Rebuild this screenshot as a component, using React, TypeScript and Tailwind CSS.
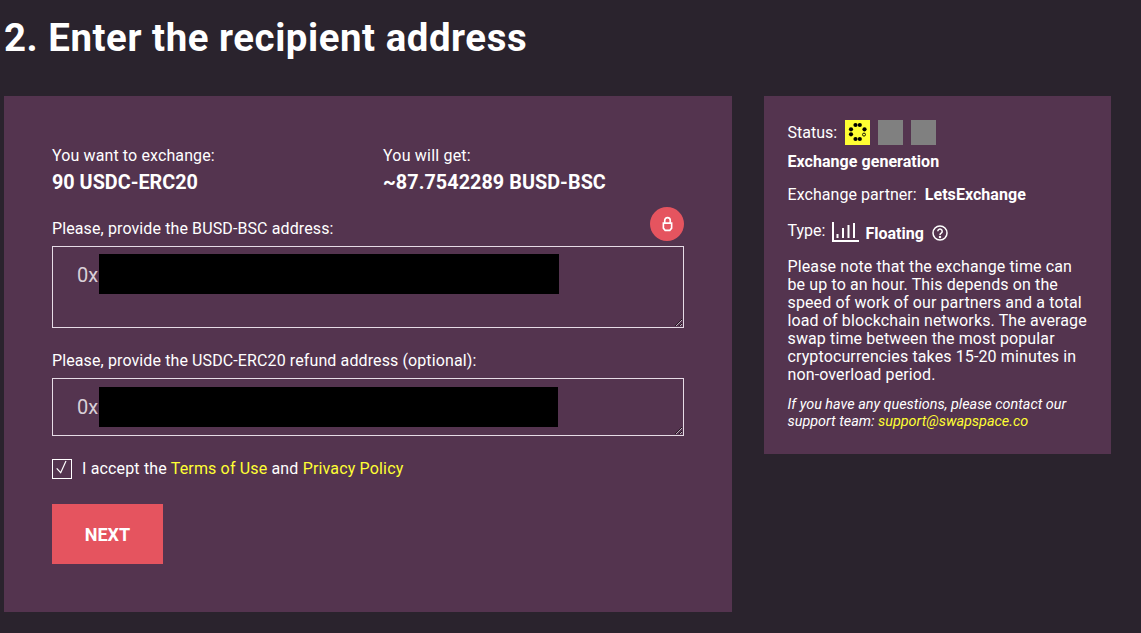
import React from "react";

function Spinner() {
  const dots = [
    [10.5, 5],[14.8, 5],[6, 9.3],[19.5, 9.3],[6, 14.3],[19, 14.6, 1],[10.5, 19],[14.8, 19],
  ];
  return (
    <span className="flex h-[25px] w-[25px] items-center justify-center bg-[#ffff33]">
      <svg width="25" height="25" viewBox="0 0 25 25">
        {dots.map((d, i) => (
          <circle key={i} cx={d[0]} cy={d[1]} r={d[2] ? 1.5 : 2.1} fill={d[2] ? "none" : "#000"} stroke={d[2] ? "#000" : "none"} strokeWidth="0.9" />
        ))}
      </svg>
    </span>
  );
}

function AddressField({ label, heightClass, mt, redactTop, redactWidth, lock }: { label: string; heightClass: string; mt: string; redactTop: string; redactWidth: string; lock?: boolean }) {
  return (
    <div className={`relative ${mt}`}>
      <label className="block text-[16px] leading-[20px] tracking-[0.11px]">{label}</label>
      {lock && (
        <span className="absolute right-0 top-[-12px] flex h-[34px] w-[34px] items-center justify-center rounded-full bg-[#e5545f]">
          <svg width="11" height="16" viewBox="0 0 12 16" fill="none" stroke="#fff" strokeWidth="1.8">
            <path d="M3 7V4a3 3 0 0 1 6 0v3" />
            <path d="M1.5 7h9v5.5L8.5 15h-5l-2-2.5z" />
          </svg>
        </span>
      )}
      <div className="relative mt-[7px]">
        <textarea
          defaultValue="0x"
          className={`block w-full ${heightClass} border border-[#e6dbe6] bg-transparent pl-[24px] pt-[14px] text-[20px] leading-[28px] text-[#d9d0d8] outline-none`}
        />
        <div className={`absolute left-[47px] ${redactTop} ${redactWidth} h-[40px] bg-black`} />
      </div>
    </div>
  );
}

export default function App() {
  return (
    <div className="min-h-[633px] overflow-hidden bg-[#2a232d] pl-[4px] text-white [font-family:Roboto,'Liberation_Sans',sans-serif]">
      <h1 className="pt-[14px] text-[38.4px] font-bold leading-[48px] tracking-[0.55px]">2. Enter the recipient address</h1>
      <div className="mt-[34px] flex items-start gap-[32px]">
        <section className="h-[516px] w-[728px] bg-[#54344f] px-[48px] pt-[50px]">
          <div className="flex">
            <div className="w-[331px]">
              <div className="text-[16px] leading-[20px] tracking-[0.12px]">You want to exchange:</div>
              <div className="mt-[5px] text-[19.8px] font-bold leading-[24px]">90 USDC-ERC20</div>
            </div>
            <div>
              <div className="text-[16px] leading-[20px] tracking-[0.2px]">You will get:</div>
              <div className="mt-[5px] text-[19.8px] font-bold leading-[24px] tracking-[0.05px]">~87.7542289 BUSD-BSC</div>
            </div>
          </div>
          <AddressField lock label="Please, provide the BUSD-BSC address:" heightClass="h-[82px]" mt="mt-[24px]" redactTop="top-[8px]" redactWidth="w-[460px]" />
          <AddressField label="Please, provide the USDC-ERC20 refund address (optional):" heightClass="h-[58px]" mt="mt-[23px]" redactTop="top-[9px]" redactWidth="w-[459px]" />
          <div className="mt-[23px] flex items-center gap-[10px] text-[16px] leading-[20px] tracking-[0.16px]">
            <span className="flex h-[20px] w-[20px] items-center justify-center border border-white">
              <svg width="18" height="18" viewBox="0 0 18 18" fill="none" stroke="#fff" strokeWidth="1.2">
                <path d="M3.7 8.3L7.7 12.7L13 1" />
              </svg>
            </span>
            <span>
              I accept the <a className="text-[#ffff33]">Terms of Use</a> and <a className="text-[#ffff33]">Privacy Policy</a>
            </span>
          </div>
          <button className="mt-[25px] h-[60px] w-[111px] bg-[#e5545f] text-[18px] font-bold text-white">NEXT</button>
        </section>
        <aside className="h-[358px] w-[347px] bg-[#54344f] pl-[23.5px] pr-[21px] pt-[24px] text-[16px] leading-[18px]">
          <div className="flex items-center gap-[8px]">
            <span className="leading-[25px]">Status:</span>
            <Spinner />
            <span className="h-[25px] w-[25px] bg-[#808080]" />
            <span className="h-[25px] w-[25px] bg-[#808080]" />
          </div>
          <div className="mt-[7px] font-bold leading-[20px] tracking-[0.05px]">Exchange generation</div>
          <div className="mt-[13px] flex gap-[8px] leading-[20px] tracking-[0.05px]">
            <span>Exchange partner:</span>
            <span className="font-bold">LetsExchange</span>
          </div>
          <div className="mt-[16px] flex items-center leading-[20px]">
            <span className="mt-[-3px]">Type:</span>
            <svg className="ml-[7px]" width="27" height="21" viewBox="0 0 27 21" fill="none" stroke="#fff" strokeWidth="2">
              <path d="M1 0v19h26" />
              <path d="M5.5 12v4M11 6v10M16.5 3v13M22 1v15" />
            </svg>
            <span className="ml-[6px] mt-[3px] font-bold">Floating</span>
            <svg className="ml-[8px] mt-[1px]" width="16" height="16" viewBox="0 0 16 16" fill="none" stroke="#fff" strokeWidth="1.5">
              <circle cx="8" cy="8" r="7" />
              <path d="M5.8 6.2a2.2 2.2 0 1 1 3.4 1.9c-.8.5-1.2.9-1.2 1.9" />
              <circle cx="8" cy="12" r=".5" fill="#fff" />
            </svg>
          </div>
          <p className="mt-[14px] tracking-[0.12px]">
            Please note that the exchange time can be up to an hour. This depends on the speed of work of our partners and a total load of blockchain networks. The average swap time between the most popular cryptocurrencies takes 15-20 minutes in non-overload period.
          </p>
          <p className="mt-[12px] text-[14.4px] italic leading-[17px]">
            If you have any questions, please contact our support team: <a className="text-[#ffff33]">support@swapspace.co</a>
          </p>
        </aside>
      </div>
    </div>
  );
}
